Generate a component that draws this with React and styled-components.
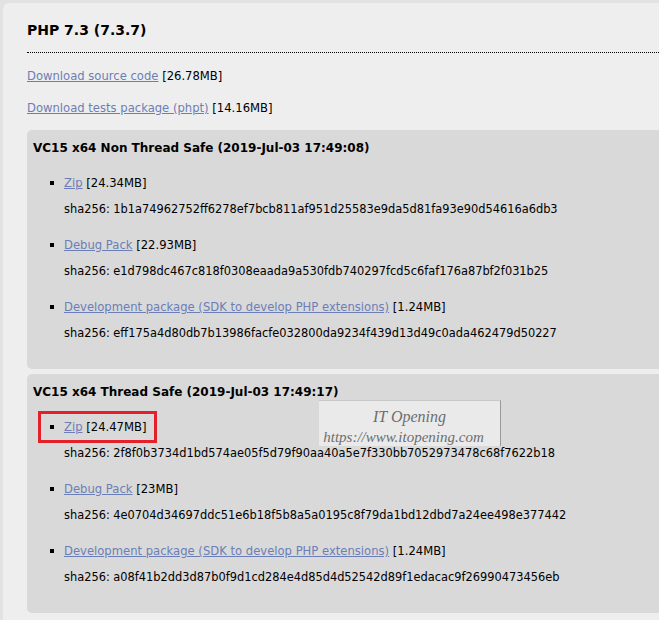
import React from "react";
import styled, { createGlobalStyle } from "styled-components";

// ---------- Global ----------

const GlobalStyle = createGlobalStyle`
  html, body {
    margin: 0;
    padding: 0;
    background: #e2e2e2;
    overflow: hidden;
  }
  body {
    font-family: "DejaVu Sans", Verdana, sans-serif;
    font-size: 11.4px;
    color: #000;
  }
`;

// ---------- Styled Components ----------

const Page = styled.div`
  position: relative;
  width: 659px;
  height: 620px;
  padding: 3px 0 0 3px;
  box-sizing: border-box;
  overflow: hidden;
`;

const Panel = styled.div`
  width: 720px;
  min-height: 640px;
  background: #eeeeee;
  border-radius: 6px 0 0 0;
  padding: 17px 0 0 24px;
  box-sizing: border-box;
`;

const Title = styled.h3`
  margin: 0;
  font-size: 14px;
  line-height: 20px;
  font-weight: bold;
  padding-bottom: 12px;
  border-bottom: 1px dotted #000;
`;

const DownloadLine = styled.p`
  margin: ${({ first }) => (first ? "15px" : "16px")} 0 0;
  line-height: 16px;
  font-size: 11.6px;
`;

const Link = styled.a`
  color: #6c7eb7;
  text-decoration: underline;
  cursor: pointer;
`;

const Box = styled.div`
  margin-top: ${({ first }) => (first ? "14px" : "5px")};
  background: #d9d9d9;
  border-radius: 5px 0 0 5px;
  padding: 10px 0 28px 6px;
`;

const BoxTitle = styled.h4`
  margin: 0;
  font-size: 12px;
  font-weight: bold;
  line-height: 16px;
`;

const List = styled.ul`
  list-style: none;
  margin: 19px 0 0;
  padding: 0 0 0 31px;
  display: flex;
  flex-direction: column;
  gap: 20px;
`;

const Item = styled.li`
  position: relative;
  line-height: 16px;

  &::before {
    content: "";
    position: absolute;
    left: -14px;
    top: 6px;
    width: 4px;
    height: 4px;
    background: #000;
  }
`;

const FileLine = styled.div`
  font-size: 11.6px;
`;

const Sha = styled.div`
  margin-top: 10px;
`;

const Highlight = styled.span`
  position: absolute;
  left: -26px;
  top: -8px;
  width: 119px;
  height: 32px;
  border: 3px solid #e4202a;
  box-sizing: border-box;
`;

const Watermark = styled.div`
  position: absolute;
  left: 319px;
  top: 400px;
  width: 182px;
  height: 46px;
  background: rgba(236, 236, 236, 0.92);
  border-right: 1px solid #9a9a9a;
  border-top: 1px solid #c8c8c8;
  box-sizing: border-box;
  font-family: "Liberation Serif", "DejaVu Serif", serif;
  font-style: italic;
  color: #6e6e6e;
  text-align: center;
`;

const MarkTitle = styled.div`
  font-size: 16px;
  line-height: 16px;
  margin-top: 8px;
`;

const MarkUrl = styled.div`
  font-size: 15px;
  line-height: 16px;
  margin-top: 4px;
  padding-right: 12px;
`;

// ---------- Data ----------

const builds = [
  {
    title: "VC15 x64 Non Thread Safe (2019-Jul-03 17:49:08)",
    files: [
      {
        name: "Zip",
        size: "24.34MB",
        sha: "1b1a74962752ff6278ef7bcb811af951d25583e9da5d81fa93e90d54616a6db3",
      },
      {
        name: "Debug Pack",
        size: "22.93MB",
        sha: "e1d798dc467c818f0308eaada9a530fdb740297fcd5c6faf176a87bf2f031b25",
      },
      {
        name: "Development package (SDK to develop PHP extensions)",
        size: "1.24MB",
        sha: "eff175a4d80db7b13986facfe032800da9234f439d13d49c0ada462479d50227",
      },
    ],
  },
  {
    title: "VC15 x64 Thread Safe (2019-Jul-03 17:49:17)",
    files: [
      {
        name: "Zip",
        size: "24.47MB",
        sha: "2f8f0b3734d1bd574ae05f5d79f90aa40a5e7f330bb7052973478c68f7622b18",
        marked: true,
      },
      {
        name: "Debug Pack",
        size: "23MB",
        sha: "4e0704d34697ddc51e6b18f5b8a5a0195c8f79da1bd12dbd7a24ee498e377442",
      },
      {
        name: "Development package (SDK to develop PHP extensions)",
        size: "1.24MB",
        sha: "a08f41b2dd3d87b0f9d1cd284e4d85d4d52542d89f1edacac9f26990473456eb",
      },
    ],
  },
];

// ---------- React Component ----------

const App = () => {
  return (
    <Page>
      <GlobalStyle />
      <Panel>
        <Title>PHP 7.3 (7.3.7)</Title>
        <DownloadLine first>
          <Link>Download source code</Link> [26.78MB]
        </DownloadLine>
        <DownloadLine>
          <Link>Download tests package (phpt)</Link> [14.16MB]
        </DownloadLine>

        {builds.map((build, i) => (
          <Box key={build.title} first={i === 0}>
            <BoxTitle>{build.title}</BoxTitle>
            <List>
              {build.files.map((file) => (
                <Item key={file.sha}>
                  {file.marked && <Highlight />}
                  <FileLine>
                    <Link>{file.name}</Link> [{file.size}]
                  </FileLine>
                  <Sha>sha256: {file.sha}</Sha>
                </Item>
              ))}
            </List>
          </Box>
        ))}
      </Panel>

      {/* watermark stamp over the page */}
      <Watermark>
        <MarkTitle>IT Opening</MarkTitle>
        <MarkUrl>https://www.itopening.com</MarkUrl>
      </Watermark>
    </Page>
  );
};

export default App;
